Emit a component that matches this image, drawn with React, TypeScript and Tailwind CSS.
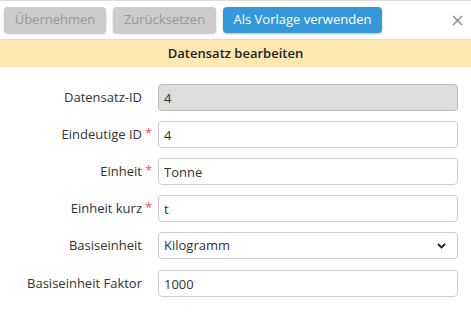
import React from "react";

const Field = ({
  label,
  required,
  children,
}: {
  label: string;
  required?: boolean;
  children: React.ReactNode;
}) => (
  <div className="flex items-center h-[27px]">
    <div className="w-[142px] shrink-0 text-right relative text-[#333]">
      {label}
      {required && (
        <span className="absolute left-full ml-[3px] top-[-1px] text-[#ef5350]">*</span>
      )}
    </div>
    <div className="ml-4 w-[300px]">{children}</div>
  </div>
);

const baseCls =
  "w-full h-[27px] rounded-[4px] border px-[5px] text-[13px] text-[#333] outline-none";
const inputCls = baseCls + " border-[#ccc] bg-white";

export default function App() {
  return (
    <div
      className="w-[471px] h-[313px] bg-white border-t border-[#ddd] text-[13px]"
      style={{ fontFamily: '"Open Sans", "Noto Sans", sans-serif' }}
    >
      <div className="flex items-center gap-[7px] pl-[4px] pr-[4px] pt-[5px] h-[38px] pb-[5px]">
        <button className="h-[26px] w-[102px] rounded-[4px] bg-[#cccccc] text-[#999] shadow-[0_1px_2px_rgba(0,0,0,0.25)]">
          Übernehmen
        </button>
        <button className="h-[26px] w-[103px] rounded-[4px] bg-[#cccccc] text-[#999] shadow-[0_1px_2px_rgba(0,0,0,0.25)]">
          Zurücksetzen
        </button>
        <button className="h-[26px] w-[159px] rounded-[4px] bg-[#3498db] text-white shadow-[0_1px_2px_rgba(0,0,0,0.25)]">
          Als Vorlage verwenden
        </button>
        <div className="ml-auto mr-[4px]">
          <svg width="11" height="11" viewBox="0 0 11 11">
            <path d="M1 1L10 10M10 1L1 10" stroke="#888" strokeWidth="1.4" />
          </svg>
        </div>
      </div>
      <div className="h-[28px] border-t border-[#ddd] bg-[#fde8b1] flex items-center justify-center font-semibold text-[#222]">
        Datensatz bearbeiten
      </div>
      <div className="flex flex-col gap-[10px] pt-[17px]">
        <Field label="Datensatz-ID">
          <input className={baseCls + " bg-[#dddddd] border-[#bbb]"} value="4" readOnly />
        </Field>
        <Field label="Eindeutige ID" required>
          <input className={inputCls} value="4" readOnly />
        </Field>
        <Field label="Einheit" required>
          <input className={inputCls} value="Tonne" readOnly />
        </Field>
        <Field label="Einheit kurz" required>
          <input className={inputCls} value="t" readOnly />
        </Field>
        <Field label="Basiseinheit">
          <div className="relative">
            <div className={inputCls + " flex items-center"}>Kilogramm</div>
            <svg
              className="absolute right-[12px] top-[11px]"
              width="9"
              height="6"
              viewBox="0 0 9 6"
            >
              <path d="M1 1L4.5 4.5L8 1" stroke="#222" strokeWidth="1.8" fill="none" />
            </svg>
          </div>
        </Field>
        <div className="mt-[1px]">
          <Field label="Basiseinheit Faktor">
            <input className={inputCls} value="1000" readOnly />
          </Field>
        </div>
      </div>
    </div>
  );
}
